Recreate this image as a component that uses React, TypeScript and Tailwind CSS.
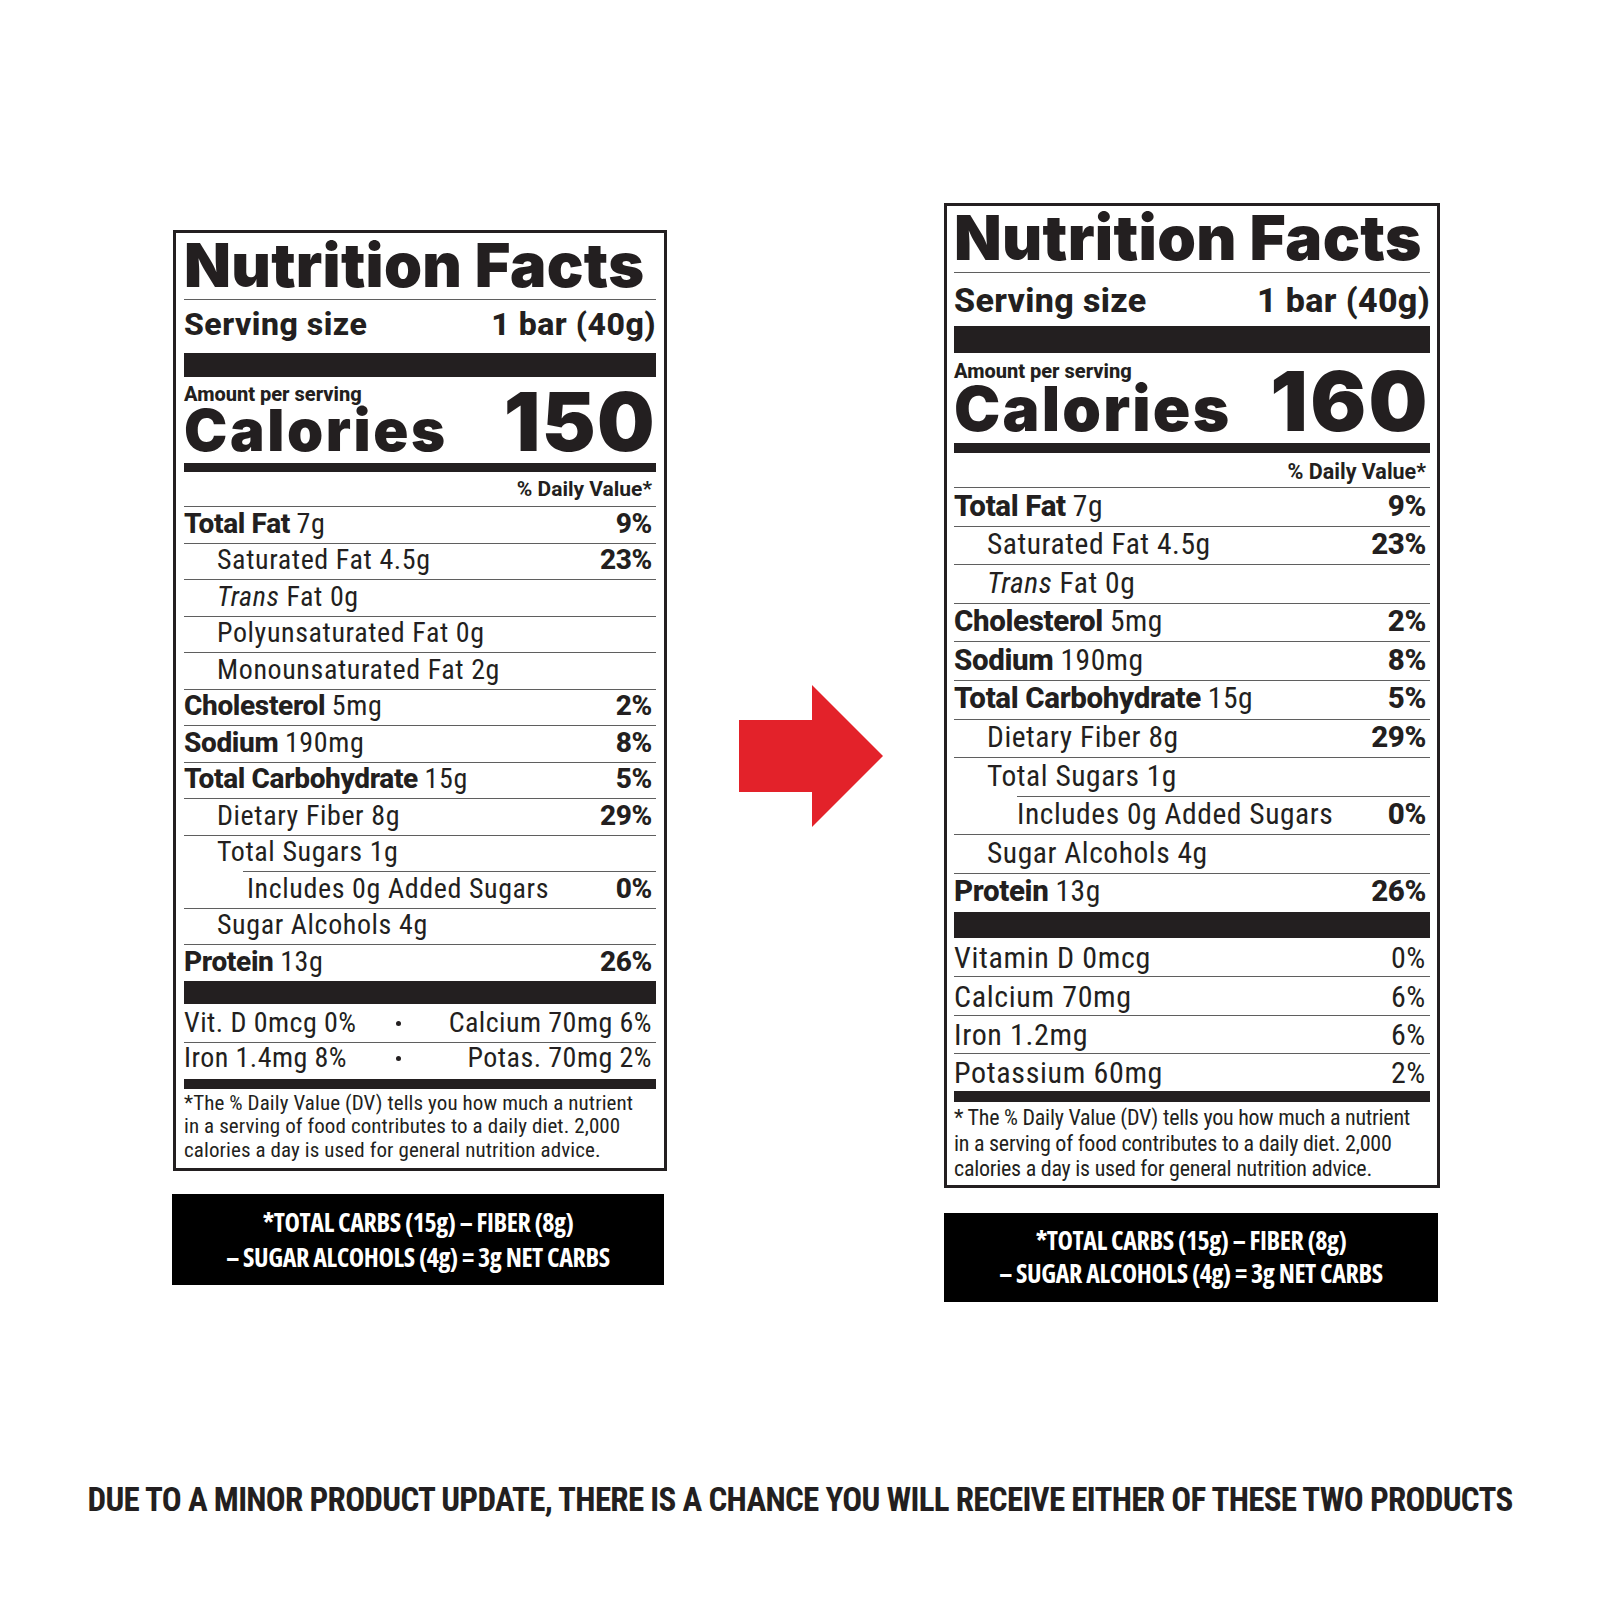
type Row = {
  bold?: string;
  text: string;
  dv?: string;
  indent?: 0 | 1 | 2;
  trans?: boolean;
};

const oldRows: Row[] = [
  { bold: "Total Fat", text: "7g", dv: "9%" },
  { indent: 1, text: "Saturated Fat 4.5g", dv: "23%" },
  { indent: 1, trans: true, text: "Fat 0g" },
  { indent: 1, text: "Polyunsaturated Fat 0g" },
  { indent: 1, text: "Monounsaturated Fat 2g" },
  { bold: "Cholesterol", text: "5mg", dv: "2%" },
  { bold: "Sodium", text: "190mg", dv: "8%" },
  { bold: "Total Carbohydrate", text: "15g", dv: "5%" },
  { indent: 1, text: "Dietary Fiber 8g", dv: "29%" },
  { indent: 1, text: "Total Sugars 1g" },
  { indent: 2, text: "Includes 0g Added Sugars", dv: "0%" },
  { indent: 1, text: "Sugar Alcohols 4g" },
  { bold: "Protein", text: "13g", dv: "26%" },
];

const newRows: Row[] = oldRows.filter(
  (r) => !r.text.startsWith("Polyunsaturated") && !r.text.startsWith("Monounsaturated")
);

const newVitamins = [
  ["Vitamin D 0mcg", "0%"],
  ["Calcium 70mg", "6%"],
  ["Iron 1.2mg", "6%"],
  ["Potassium 60mg", "2%"],
];

// every size is written out per label, the two panels are not quite the same scale
const sizes = {
  old: {
    box: "w-[494px] ml-[1px] px-[8px]",
    title: "h-[67px] pt-[2px] text-[61px]",
    serving: "h-[53px] pt-[8px] text-[32px] tracking-[0.5px]",
    thick: "h-[24px]",
    amount: "pt-[4px] h-[86px]",
    amountText: "mt-[4px] text-[20px]",
    cal: "text-[58px] tracking-[2.6px]",
    calNum: "text-[81px] tracking-[1.4px]",
    mid: "h-[9px]",
    bottomBar: "h-[10px]",
    dvHead: "h-[34px] pt-[7px] text-[21px]",
    row: "h-[36.5px] pt-[2.5px] text-[28px]",
    reg: "tracking-[0.6px]",
    sub: "pl-[33px]",
    subsub: "ml-[59px] pl-[4px]",
    thick2: "h-[23px]",
    foot: "pt-[3px] pb-[6px] text-[21px] leading-[23.5px] [font-stretch:75%] tracking-[0.1px]",
    carb: "w-[492px] mt-[23px] h-[91px] text-[26px] leading-[35px]",
  },
  new: {
    box: "w-[496px] px-[7px]",
    title: "h-[67px] pt-[1px] text-[62px]",
    serving: "h-[53px] pt-[10px] text-[34px] tracking-[0.35px]",
    thick: "h-[27px]",
    amount: "pt-[3px] h-[90px]",
    amountText: "mt-[4px] text-[20px]",
    cal: "text-[62px] tracking-[2.2px]",
    calNum: "text-[83px] tracking-[2.4px]",
    mid: "h-[10px]",
    bottomBar: "h-[11px]",
    dvHead: "h-[34px] pt-[8px] text-[21.5px]",
    row: "h-[38.6px] pt-[3.5px] text-[29.5px]",
    reg: "tracking-[0.55px]",
    sub: "pl-[33px]",
    subsub: "ml-[63px] pl-0",
    thick2: "h-[26.5px]",
    foot: "pt-[3px] pb-[3px] text-[22px] leading-[25.5px] [font-stretch:75%] tracking-[-0.25px]",
    carb: "w-[494px] mt-[25px] h-[89px] text-[26px] leading-[33px]",
  },
};

type Variant = keyof typeof sizes;

function NutrientRow({ row, v }: { row: Row; v: Variant }) {
  const s = sizes[v];
  const indent = row.indent === 1 ? s.sub : row.indent === 2 ? s.subsub : "";
  return (
    <div
      className={`flex items-start justify-between border-t border-[#5f5f5f] leading-none [font-stretch:87.5%] ${s.row} ${indent}`}
    >
      <span className={`whitespace-nowrap font-normal ${s.reg}`}>
        {row.bold && (
          <span className="font-extrabold tracking-[-0.35px] [font-stretch:100%]">{row.bold} </span>
        )}
        {row.trans && <span className="italic">Trans </span>}
        {row.text}
      </span>
      {row.dv && (
        <span className="pr-[4px] font-extrabold tracking-[-0.35px] [font-stretch:100%]">{row.dv}</span>
      )}
    </div>
  );
}

function Footnote({ v }: { v: Variant }) {
  return (
    <div className={`flex flex-col whitespace-nowrap font-normal ${sizes[v].foot}`}>
      <span>{v === "old" ? "*The" : "* The"} % Daily Value (DV) tells you how much a nutrient</span>
      <span>in a serving of food contributes to a daily diet. 2,000</span>
      <span>calories a day is used for general nutrition advice.</span>
    </div>
  );
}

function Dot() {
  return (
    <span className="flex w-[18px] justify-center pt-[12px]">
      <span className="h-[5px] w-[5px] rounded-full bg-[#231f20]" />
    </span>
  );
}

function Label({ v, rows, calories }: { v: Variant; rows: Row[]; calories: string }) {
  const s = sizes[v];
  return (
    <div className={`border-[3px] border-[#231f20] bg-white ${s.box}`}>
      <div className={`border-b border-[#5f5f5f] font-['Inter',sans-serif] font-black leading-none tracking-[0.3px] ${s.title}`}>
        Nutrition Facts
      </div>
      <div className={`flex justify-between font-extrabold leading-none ${s.serving}`}>
        <span>Serving size</span>
        <span>1 bar (40g)</span>
      </div>
      <div className={`bg-[#231f20] ${s.thick}`} />
      <div className={`flex justify-between [align-items:last_baseline] ${s.amount}`}>
        <div className="flex flex-col">
          <span className={`font-extrabold leading-none ${s.amountText}`}>Amount per serving</span>
          <span className={`-mt-[3px] font-['Inter',sans-serif] font-black leading-none ${s.cal}`}>Calories</span>
        </div>
        <span className={`font-['Inter',sans-serif] font-black leading-none ${s.calNum}`}>{calories}</span>
      </div>
      <div className={`bg-[#231f20] ${s.mid}`} />
      <div className={`pr-[4px] text-right font-bold leading-none ${s.dvHead}`}>% Daily Value*</div>
      {rows.map((r) => (
        <NutrientRow key={r.text} row={r} v={v} />
      ))}
      <div className={`bg-[#231f20] ${s.thick2}`} />
      {v === "old" ? (
        <>
          <div className="flex h-[38px] items-start pt-[5px] text-[28px] leading-none font-normal tracking-[0.45px] [font-stretch:87.5%]">
            <span className="w-[205px] whitespace-nowrap">Vit. D 0mcg 0%</span>
            <Dot />
            <span className="flex-1 whitespace-nowrap pr-[4px] text-right">Calcium 70mg 6%</span>
          </div>
          <div className="flex h-[37px] items-start border-t border-[#5f5f5f] pt-[1px] text-[28px] leading-none font-normal tracking-[0.45px] [font-stretch:87.5%]">
            <span className="w-[205px] whitespace-nowrap">Iron 1.4mg 8%</span>
            <Dot />
            <span className="flex-1 whitespace-nowrap pr-[4px] text-right">Potas. 70mg 2%</span>
          </div>
        </>
      ) : (
        newVitamins.map(([name, dv], i) => (
          <div
            key={name}
            className={`flex h-[38.25px] items-start justify-between pt-[4.5px] text-[30px] leading-none font-normal tracking-[0.65px] [font-stretch:87.5%] ${
              i > 0 ? "border-t border-[#5f5f5f]" : ""
            }`}
          >
            <span>{name}</span>
            <span className="pr-[4px]">{dv}</span>
          </div>
        ))
      )}
      <div className={`bg-[#231f20] ${s.bottomBar}`} />
      <Footnote v={v} />
    </div>
  );
}

function NetCarbs({ v }: { v: Variant }) {
  return (
    <div
      className={`flex flex-col items-center justify-center bg-black font-['Open_Sans',sans-serif] font-bold tracking-[-0.4px] text-white [font-stretch:75%] ${sizes[v].carb}`}
    >
      <span>*TOTAL CARBS (15g) – FIBER (8g)</span>
      <span>– SUGAR ALCOHOLS (4g) = 3g NET CARBS</span>
    </div>
  );
}

function Arrow() {
  return (
    <svg width="144" height="142" viewBox="0 0 144 142" className="block">
      <path d="M0 35 H73 V0 L144 71 L73 142 V107 H0 Z" fill="#e3222a" />
    </svg>
  );
}

export default function App() {
  return (
    <div className="min-h-[1600px] w-[1600px] bg-white font-['Roboto',sans-serif] text-[#231f20]">
      <div className="box-border flex h-[1483px] items-start pl-[172px] pt-[203px]">
        <div className="mt-[27px] flex w-[495px] flex-col items-start">
          <Label v="old" rows={oldRows} calories="150" />
          <NetCarbs v="old" />
        </div>
        <div className="ml-[72px] mt-[482px]">
          <Arrow />
        </div>
        <div className="ml-[61px] flex w-[496px] flex-col items-start">
          <Label v="new" rows={newRows} calories="160" />
          <NetCarbs v="new" />
        </div>
      </div>
      <p className="text-center text-[33px] font-bold leading-none tracking-[-0.7px] [font-stretch:75%]">
        DUE TO A MINOR PRODUCT UPDATE, THERE IS A CHANCE YOU WILL RECEIVE EITHER OF THESE TWO PRODUCTS
      </p>
    </div>
  );
}
